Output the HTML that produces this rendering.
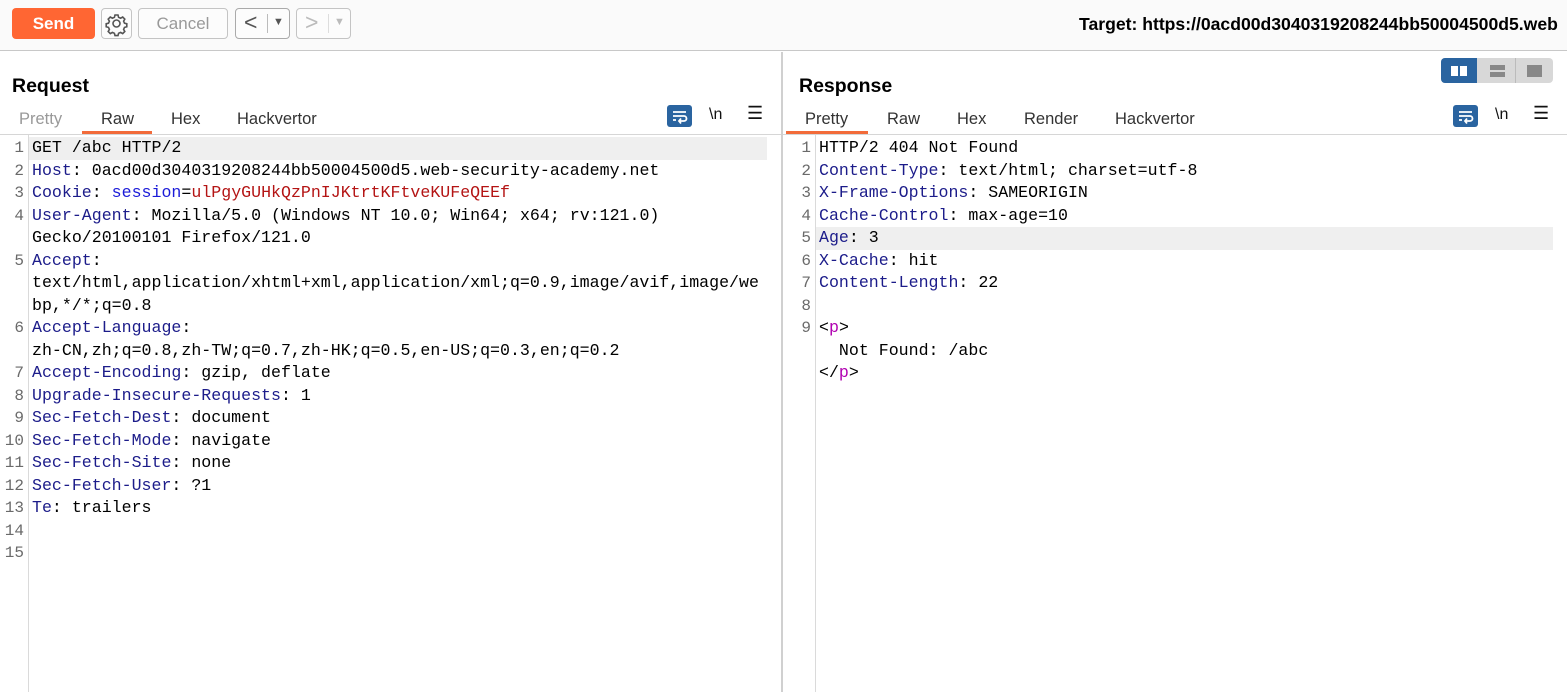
<!DOCTYPE html>
<html><head><meta charset="utf-8"><style>
*{margin:0;padding:0;box-sizing:border-box}
body{width:1567px;height:692px;overflow:hidden;background:#fff;font-family:"Liberation Sans",sans-serif;position:relative}
.abs{position:absolute}
.top{left:0;top:0;width:1567px;height:51px;background:#fafafa;border-bottom:1px solid #c8c8c8}
.btn{position:absolute;top:8px;height:31px;border:1px solid #c4c4c4;border-radius:4px;background:#fcfcfc}
.h{font-weight:bold;font-size:19.5px;color:#000}
.tab{position:absolute;top:110px;font-size:16.5px;color:#333}
.code{font-family:"Liberation Mono","NSimSun",monospace;font-size:16.6px;line-height:22.5px;white-space:pre;position:absolute}
.ln{position:absolute;width:24px;text-align:right;color:#6a6a6a;font-family:"Liberation Mono",monospace;font-size:16px;line-height:22.5px}
.k{color:#1c1c8a}.b{color:#1b1bd8}.r{color:#b41414}.m{color:#b000b0}
.ico{position:absolute;width:25px;height:22px;background:#2a64a0;border-radius:3px}
</style></head><body>
<div class="abs top"></div>
<div class="abs" style="left:12px;top:8px;width:83px;height:31px;background:#ff6633;border-radius:4px;color:#fff;font-weight:bold;font-size:17px;text-align:center;line-height:31px">Send</div>
<div class="btn" style="left:101px;width:31px">
<svg width="29" height="29" viewBox="0 0 29 29" style="position:absolute;left:0;top:0"><g fill="none" stroke="#555" stroke-width="1.6"><circle cx="14.5" cy="14.5" r="3.5"/><path d="M13 6h3l.6 2.3 2 .9 2.1-1.2 2.1 2.1-1.2 2.1.9 2 2.3.6v3l-2.3.6-.9 2 1.2 2.1-2.1 2.1-2.1-1.2-2 .9-.6 2.3h-3l-.6-2.3-2-.9-2.1 1.2-2.1-2.1 1.2-2.1-.9-2-2.3-.6v-3l2.3-.6.9-2-1.2-2.1 2.1-2.1 2.1 1.2 2-.9z"/></g></svg></div>
<div class="btn" style="left:138px;width:90px;color:#999;font-size:17px;text-align:center;line-height:29px">Cancel</div>
<div class="btn" style="left:235px;width:55px;border-color:#aaa"><span style="position:absolute;left:8px;top:0px;font-size:23px;color:#555">&lt;</span><span style="position:absolute;left:31px;top:5px;width:1px;height:19px;background:#bbb"></span><span style="position:absolute;left:37px;top:7px;font-size:11px;color:#555">▼</span></div>
<div class="btn" style="left:296px;width:55px"><span style="position:absolute;left:8px;top:0px;font-size:23px;color:#bbb">&gt;</span><span style="position:absolute;left:31px;top:5px;width:1px;height:19px;background:#ddd"></span><span style="position:absolute;left:37px;top:7px;font-size:11px;color:#bbb">▼</span></div>
<div class="abs" style="left:1079px;top:14px;font-weight:bold;font-size:17.6px;color:#000;white-space:nowrap">Target: https://0acd00d3040319208244bb50004500d5.web</div>

<div class="abs" style="left:781px;top:52px;width:2px;height:640px;background:#d0d0d0"></div>
<div class="abs h" style="left:12px;top:75px">Request</div>
<div class="abs h" style="left:799px;top:75px">Response</div>

<div class="abs" style="left:1441px;top:58px;width:112px;height:25px;background:#d8d8d8;border-radius:4px"></div>
<div class="abs" style="left:1441px;top:58px;width:36px;height:25px;background:#2a64a0;border-radius:4px 0 0 4px"></div>
<div class="abs" style="left:1451px;top:66px;width:7px;height:10px;background:#fff"></div><div class="abs" style="left:1460px;top:66px;width:7px;height:10px;background:#fff"></div>
<div class="abs" style="left:1515px;top:58px;width:1px;height:25px;background:#bbb"></div>
<div class="abs" style="left:1490px;top:65px;width:15px;height:5px;background:#888"></div><div class="abs" style="left:1490px;top:72px;width:15px;height:5px;background:#888"></div>
<div class="abs" style="left:1527px;top:65px;width:15px;height:12px;background:#888"></div>

<div class="tab" style="left:19px;color:#999">Pretty</div>
<div class="tab" style="left:101px">Raw</div>
<div class="tab" style="left:171px">Hex</div>
<div class="tab" style="left:237px">Hackvertor</div>
<div class="abs" style="left:82px;top:131px;width:70px;height:3px;background:#f26b3a"></div>
<div class="abs" style="left:0;top:134px;width:781px;height:1px;background:#d6d6d6"></div>

<div class="tab" style="left:805px">Pretty</div>
<div class="tab" style="left:887px">Raw</div>
<div class="tab" style="left:957px">Hex</div>
<div class="tab" style="left:1024px">Render</div>
<div class="tab" style="left:1115px">Hackvertor</div>
<div class="abs" style="left:786px;top:131px;width:82px;height:3px;background:#f26b3a"></div>
<div class="abs" style="left:783px;top:134px;width:784px;height:1px;background:#d6d6d6"></div>

<div class="ico" style="left:667px;top:105px"></div>
<div class="ico" style="left:1453px;top:105px"></div>
<svg class="abs" style="left:667px;top:105px" width="25" height="22"><g fill="none" stroke="#fff" stroke-width="1.8"><path d="M6 7h13M6 11h11a2.5 2.5 0 0 1 0 5h-4M6 15h3M14 13.5l-2 2.5 2 2.5"/></g></svg>
<svg class="abs" style="left:1453px;top:105px" width="25" height="22"><g fill="none" stroke="#fff" stroke-width="1.8"><path d="M6 7h13M6 11h11a2.5 2.5 0 0 1 0 5h-4M6 15h3M14 13.5l-2 2.5 2 2.5"/></g></svg>
<div class="abs" style="left:709px;top:106px;font-size:16px;color:#111">\n</div>
<div class="abs" style="left:1495px;top:106px;font-size:16px;color:#111">\n</div>
<div class="abs" style="left:747px;top:103px;font-size:18px;color:#111">☰</div>
<div class="abs" style="left:1533px;top:103px;font-size:18px;color:#111">☰</div>

<div class="abs" style="left:28px;top:135px;width:1px;height:557px;background:#dadada"></div>
<div class="abs" style="left:815px;top:135px;width:1px;height:557px;background:#dadada"></div>
<div class="abs" style="left:29px;top:137px;width:738px;height:23px;background:#efefef"></div>
<div class="abs" style="left:816px;top:227px;width:737px;height:23px;background:#efefef"></div>

<div class="ln" style="left:0;top:137px">1<br>2<br>3<br>4<br><br>5<br><br><br>6<br><br>7<br>8<br>9<br>10<br>11<br>12<br>13<br>14<br>15</div>
<div class="code" style="left:32px;top:137px">GET /abc HTTP/2
<span class="k">Host</span>: 0acd00d3040319208244bb50004500d5.web-security-academy.net
<span class="k">Cookie</span>: <span class="b">session</span>=<span class="r">ulPgyGUHkQzPnIJKtrtKFtveKUFeQEEf</span>
<span class="k">User-Agent</span>: Mozilla/5.0 (Windows NT 10.0; Win64; x64; rv:121.0)
Gecko/20100101 Firefox/121.0
<span class="k">Accept</span>:
text/html,application/xhtml+xml,application/xml;q=0.9,image/avif,image/we
bp,*/*;q=0.8
<span class="k">Accept-Language</span>:
zh-CN,zh;q=0.8,zh-TW;q=0.7,zh-HK;q=0.5,en-US;q=0.3,en;q=0.2
<span class="k">Accept-Encoding</span>: gzip, deflate
<span class="k">Upgrade-Insecure-Requests</span>: 1
<span class="k">Sec-Fetch-Dest</span>: document
<span class="k">Sec-Fetch-Mode</span>: navigate
<span class="k">Sec-Fetch-Site</span>: none
<span class="k">Sec-Fetch-User</span>: ?1
<span class="k">Te</span>: trailers</div>

<div class="ln" style="left:787px;top:137px">1<br>2<br>3<br>4<br>5<br>6<br>7<br>8<br>9</div>
<div class="code" style="left:819px;top:137px">HTTP/2 404 Not Found
<span class="k">Content-Type</span>: text/html; charset=utf-8
<span class="k">X-Frame-Options</span>: SAMEORIGIN
<span class="k">Cache-Control</span>: max-age=10
<span class="k">Age</span>: 3
<span class="k">X-Cache</span>: hit
<span class="k">Content-Length</span>: 22

&lt;<span class="m">p</span>&gt;
  Not Found: /abc
&lt;/<span class="m">p</span>&gt;</div>
</body></html>
